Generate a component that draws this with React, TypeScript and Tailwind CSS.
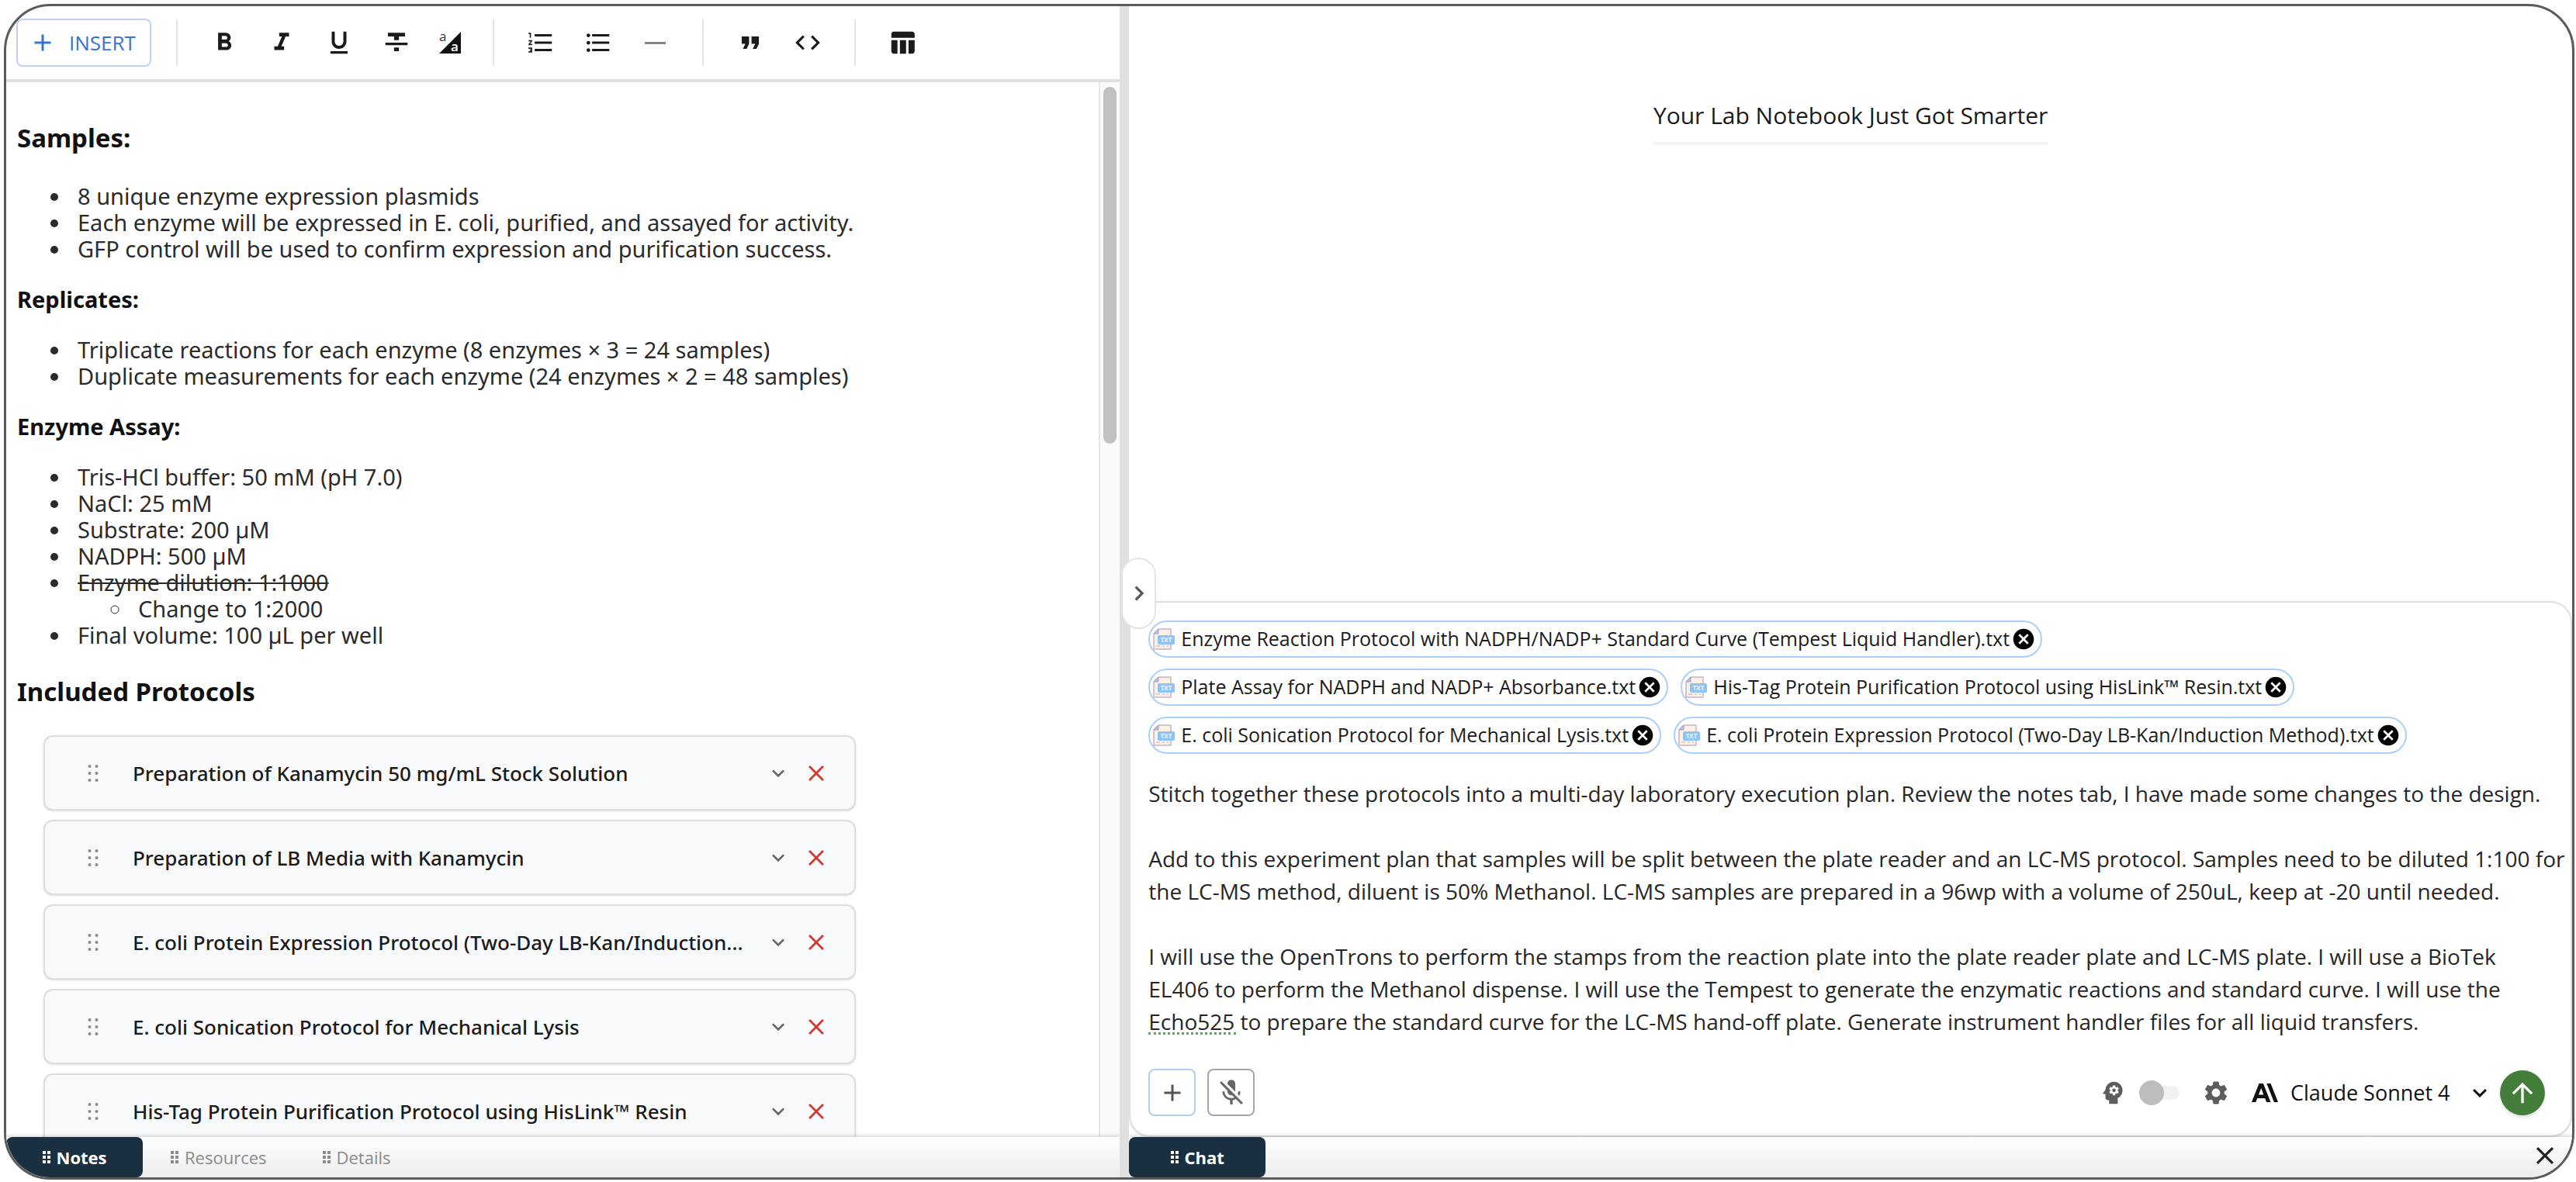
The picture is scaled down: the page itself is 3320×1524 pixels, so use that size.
import { useState, type ReactNode } from "react";
import clsx from "clsx";
import {
  MdAdd,
  MdArrowUpward,
  MdCancel,
  MdChevronRight,
  MdClose,
  MdCode,
  MdExpandMore,
  MdFormatBold,
  MdFormatItalic,
  MdFormatListBulleted,
  MdFormatListNumbered,
  MdFormatQuote,
  MdFormatStrikethrough,
  MdFormatUnderlined,
  MdMicOff,
  MdPsychology,
  MdSettings,
  MdTableChart,
} from "react-icons/md";
import { SiAnthropic } from "react-icons/si";

const protocols = [
  "Preparation of Kanamycin 50 mg/mL Stock Solution",
  "Preparation of LB Media with Kanamycin",
  "E. coli Protein Expression Protocol (Two-Day LB-Kan/Induction...",
  "E. coli Sonication Protocol for Mechanical Lysis",
  "His-Tag Protein Purification Protocol using HisLink™ Resin",
];

const attachments = [
  "Enzyme Reaction Protocol with NADPH/NADP+ Standard Curve (Tempest Liquid Handler).txt",
  "Plate Assay for NADPH and NADP+ Absorbance.txt",
  "His-Tag Protein Purification Protocol using HisLink™ Resin.txt",
  "E. coli Sonication Protocol for Mechanical Lysis.txt",
  "E. coli Protein Expression Protocol (Two-Day LB-Kan/Induction Method).txt",
];

const initialPrompt = `Stitch together these protocols into a multi-day laboratory execution plan. Review the notes tab, I have made some changes to the design.

Add to this experiment plan that samples will be split between the plate reader and an LC-MS protocol. Samples need to be diluted 1:100 for
the LC-MS method, diluent is 50% Methanol. LC-MS samples are prepared in a 96wp with a volume of 250uL, keep at -20 until needed.

I will use the OpenTrons to perform the stamps from the reaction plate into the plate reader plate and LC-MS plate. I will use a BioTek
EL406 to perform the Methanol dispense. I will use the Tempest to generate the enzymatic reactions and standard curve. I will use the
Echo525 to prepare the standard curve for the LC-MS hand-off plate. Generate instrument handler files for all liquid transfers.`;

function GripDots({ className }: { className?: string }) {
  return (
    <svg viewBox="0 0 14 22" className={className} fill="currentColor" aria-hidden>
      {[2, 11, 20].map((y) => (
        <g key={y}>
          <circle cx="2.5" cy={y} r="2" />
          <circle cx="11.5" cy={y} r="2" />
        </g>
      ))}
    </svg>
  );
}

function TabDots() {
  return (
    <svg viewBox="0 0 10 16" className="h-4 w-2.5" fill="currentColor" aria-hidden>
      {[0, 6, 12].map((y) => (
        <g key={y}>
          <rect x="0" y={y} width="4" height="4" />
          <rect x="6" y={y} width="4" height="4" />
        </g>
      ))}
    </svg>
  );
}

function HighlightIcon() {
  return (
    <svg viewBox="0 0 28 28" className="size-7 overflow-visible" aria-hidden>
      <path d="M28 0v28H0z" fill="#111" />
      <text x="0" y="12" fontSize="17" fill="#333" fontFamily="Open Sans, sans-serif">
        a
      </text>
      <text x="15" y="25" fontSize="17" fontWeight="600" fill="#fff" fontFamily="Open Sans, sans-serif">
        a
      </text>
    </svg>
  );
}

function TxtIcon() {
  return (
    <svg viewBox="0 0 28 28" className="size-7 shrink-0" aria-hidden>
      <path
        d="M7 1h16v26H1V7z"
        fill="#fdf1e3"
        stroke="#c9b1cb"
        strokeWidth="1.5"
        strokeLinejoin="round"
      />
      <path d="M7 1v6H1z" fill="#b9c3ea" stroke="#a99bc8" />
      <path d="M4 23h5M12 23h3M18 23h2" stroke="#d9c2cf" strokeWidth="1.5" />
      <rect x="6" y="9" width="22" height="12" rx="2" fill="#8cc4f7" />
      <text
        x="17"
        y="18"
        fontSize="8"
        fontWeight="700"
        fill="#e8f4ff"
        textAnchor="middle"
        fontFamily="Open Sans, sans-serif"
      >
        TXT
      </text>
    </svg>
  );
}

function ToolButton({
  label,
  narrow,
  children,
}: {
  label: string;
  narrow?: boolean;
  children: ReactNode;
}) {
  return (
    <button
      aria-label={label}
      className={clsx(
        "flex h-15 items-center justify-center text-[38px] text-[#1b1b1b]",
        narrow ? "w-16" : "w-[74px]",
      )}
    >
      {children}
    </button>
  );
}

function ToolGroup({ children }: { children: ReactNode }) {
  return (
    <div className="flex border-l-2 border-[#e4e4e4] px-[23px]">{children}</div>
  );
}

function Toolbar() {
  return (
    <div className="flex h-[98px] shrink-0 items-center border-b-4 border-[#e0e0e0] pl-[13px]">
      <button className="mr-8 flex h-[62px] items-center gap-4 rounded-lg border-2 border-[#bcd3f5] pr-[18px] pl-3.5 text-[26px] text-[#3474d4]">
        <MdAdd className="size-9" />
        INSERT
      </button>
      <ToolGroup>
        <ToolButton label="Bold"><MdFormatBold /></ToolButton>
        <ToolButton label="Italic"><MdFormatItalic /></ToolButton>
        <ToolButton label="Underline"><MdFormatUnderlined /></ToolButton>
        <ToolButton label="Strikethrough"><MdFormatStrikethrough /></ToolButton>
        <ToolButton label="Highlight" narrow><HighlightIcon /></ToolButton>
      </ToolGroup>
      <ToolGroup>
        <ToolButton label="Numbered list"><MdFormatListNumbered /></ToolButton>
        <ToolButton label="Bulleted list"><MdFormatListBulleted /></ToolButton>
        <ToolButton label="Divider">
          <span className="h-[3px] w-[27px] bg-[#858585]" />
        </ToolButton>
      </ToolGroup>
      <ToolGroup>
        <ToolButton label="Quote"><MdFormatQuote /></ToolButton>
        <ToolButton label="Code"><MdCode /></ToolButton>
      </ToolGroup>
      <ToolGroup>
        <ToolButton label="Table"><MdTableChart /></ToolButton>
      </ToolGroup>
    </div>
  );
}

function ProtocolCard({ title }: { title: string }) {
  return (
    <li className="flex h-[97px] shrink-0 items-center rounded-xl border-2 border-[#dcdee0] bg-[#f8f9fb] pr-8 pl-[55px] shadow-sm">
      <GripDots className="h-[22px] w-3.5 shrink-0 text-[#8a8a8a]" />
      <span className="ml-11 min-w-0 flex-1 text-[26px] leading-10 font-medium text-[#1b1b1b]">
        {title}
      </span>
      <button aria-label={`Expand ${title}`} className="ml-4 text-[#666]">
        <MdExpandMore className="size-8" />
      </button>
      <button aria-label={`Remove ${title}`} className="ml-4 text-[#cf3a33]">
        <MdClose className="size-[34px]" />
      </button>
    </li>
  );
}

function Notes() {
  return (
    <div className="flex min-h-0 flex-1">
      <article className="min-w-0 flex-1 overflow-hidden pt-[50px] pl-3.5 font-['Noto_Sans',sans-serif] text-[29px] leading-[34px] text-[#2b2b2b]">
        <h2 className="text-[33px] leading-11 font-bold text-[#111]">Samples:</h2>
        <ul className="mt-9 list-disc pl-[70px] [&>li]:pl-2">
          <li>8 unique enzyme expression plasmids</li>
          <li>Each enzyme will be expressed in E. coli, purified, and assayed for activity.</li>
          <li>GFP control will be used to confirm expression and purification success.</li>
        </ul>
        <h3 className="mt-7 leading-10 font-bold text-[#111]">Replicates:</h3>
        <ul className="mt-7 list-disc pl-[70px] [&>li]:pl-2">
          <li>Triplicate reactions for each enzyme (8 enzymes × 3 = 24 samples)</li>
          <li>Duplicate measurements for each enzyme (24 enzymes × 2 = 48 samples)</li>
        </ul>
        <h3 className="mt-7 leading-10 font-bold text-[#111]">Enzyme Assay:</h3>
        <ul className="mt-7 list-disc pl-[70px] [&>li]:pl-2">
          <li>Tris-HCl buffer: 50 mM (pH 7.0)</li>
          <li>NaCl: 25 mM</li>
          <li>Substrate: 200 µM</li>
          <li>NADPH: 500 µM</li>
          <li>
            <s className="decoration-2">Enzyme dilution: 1:1000</s>
            <ul className="list-[circle] pl-[70px] [&>li]:pl-2">
              <li>Change to 1:2000</li>
            </ul>
          </li>
          <li>Final volume: 100 µL per well</li>
        </ul>
        <h2 className="mt-[34px] text-[33px] leading-11 font-bold text-[#111]">
          Included Protocols
        </h2>
        <ul className="mt-[34px] mr-[22.5%] ml-[34px] flex flex-col gap-3">
          {protocols.map((title) => (
            <ProtocolCard key={title} title={title} />
          ))}
        </ul>
      </article>
      <div className="w-[27px] shrink-0 border-l-2 border-[#e6e6e6] bg-[#fafafa] px-1 pt-1.5">
        <div className="h-[34%] rounded-full bg-[#c1c1c1]" />
      </div>
    </div>
  );
}

function Tab({ label, active }: { label: string; active?: boolean }) {
  return (
    <button
      role="tab"
      aria-selected={!!active}
      className={clsx(
        "flex h-full items-center gap-2 text-[22px]",
        active
          ? "w-[176px] justify-center rounded-lg bg-[#1a2f3f] font-bold text-white"
          : "px-9 text-[#8a8a8a]",
      )}
    >
      <TabDots />
      {label}
    </button>
  );
}

function TabBar({ children }: { children: ReactNode }) {
  return (
    <div className="flex h-[52px] shrink-0 bg-linear-to-b from-white to-[#ececec] shadow-[0_-2px_4px_rgba(0,0,0,0.14)]">
      {children}
    </div>
  );
}

function Attachment({ name }: { name: string }) {
  return (
    <li className="flex h-12 items-center rounded-full border-2 border-[#a9d0fa] px-1 text-[25px] text-[#1b1b1b]">
      <TxtIcon />
      <span className="ml-2 whitespace-nowrap">{name}</span>
      <button aria-label={`Remove ${name}`} className="mx-0.5 text-black">
        <MdCancel className="size-8" />
      </button>
    </li>
  );
}

function Composer() {
  const [prompt, setPrompt] = useState(initialPrompt);
  const [thinking, setThinking] = useState(false);

  return (
    <div className="shrink-0 rounded-[28px] rounded-tl-none border-2 border-[#e0e0e0] bg-white pt-[23px] pb-[25px] shadow-sm">
      <ul className="flex flex-wrap gap-x-4 gap-y-3.5 px-[23px]">
        {attachments.map((name) => (
          <Attachment key={name} name={name} />
        ))}
      </ul>

      <div className="relative mt-[30px] h-[336px] pr-0.5 pl-[23px] text-[28px] leading-[42px] text-[#262626]">
        <textarea
          aria-label="Message"
          spellCheck={false}
          value={prompt}
          onChange={(e) => setPrompt(e.target.value)}
          className="block size-full resize-none overflow-hidden outline-none"
        />
        {/* spelling mark under the first word of the last line */}
        <span className="pointer-events-none absolute bottom-1 left-[23px] w-[113px] border-b-3 border-dotted border-[#4caf50]" />
      </div>

      <div className="mt-10 flex items-center pr-[33px] pl-[23px]">
        <button
          aria-label="Add attachment"
          className="flex size-[61px] items-center justify-center rounded-lg border-2 border-[#b3cef5] text-[#555]"
        >
          <MdAdd className="size-9" />
        </button>
        <button
          aria-label="Microphone off"
          className="ml-[15px] flex size-[61px] items-center justify-center rounded-lg border-2 border-[#a6a6a6] text-[#666]"
        >
          <MdMicOff className="size-10" />
        </button>

        <label className="ml-auto flex items-center gap-[15px] text-[#5c5c5c]">
          <MdPsychology className="size-[38px]" aria-label="Extended thinking" />
          <input
            type="checkbox"
            role="switch"
            checked={thinking}
            onChange={(e) => setThinking(e.target.checked)}
            className="relative h-8 w-14 appearance-none before:absolute before:inset-x-1 before:top-[7px] before:h-[18px] before:rounded-full before:bg-[#f1f1f1] after:absolute after:top-0 after:left-0 after:size-8 after:rounded-full after:bg-[#bdbdbd] checked:after:left-6"
          />
        </label>
        <button aria-label="Settings" className="ml-[25px] text-[#5c5c5c]">
          <MdSettings className="size-9" />
        </button>
        <SiAnthropic className="ml-7 size-[34px] text-[#111]" aria-hidden />
        <div className="relative ml-4 text-[#111]">
          <select
            aria-label="Model"
            className="h-10 w-[262px] appearance-none text-[27px] leading-10 outline-none"
          >
            <option>Claude Sonnet 4</option>
          </select>
          <MdExpandMore className="pointer-events-none absolute top-0.5 right-0 size-9" />
        </div>
        <button
          aria-label="Send"
          className="ml-2 flex size-[58px] items-center justify-center rounded-full bg-[#427d39] text-white shadow-md"
        >
          <MdArrowUpward className="size-10" />
        </button>
      </div>
    </div>
  );
}

export default function App() {
  return (
    <div className="h-screen bg-white pt-[5px] pr-0.5 pb-[3px] pl-[5px] font-['Open_Sans','Noto_Sans',sans-serif]">
      <div className="flex h-full overflow-hidden rounded-[60px] border-[3px] border-[#5a5b5b]">
        <section className="flex w-[43.4%] shrink-0 flex-col">
          <Toolbar />
          <Notes />
          <TabBar>
            <Tab label="Notes" active />
            <Tab label="Resources" />
            <Tab label="Details" />
          </TabBar>
        </section>

        <div className="relative z-10 w-3 shrink-0 bg-[#e0e0e0]">
          <button
            aria-label="Collapse panel"
            className="absolute top-[711px] left-0.5 flex h-[92px] w-[45px] items-center justify-center rounded-full border-2 border-[#e4e4e4] bg-white text-[#555]"
          >
            <MdChevronRight className="size-[38px] shrink-0" />
          </button>
        </div>

        <section className="flex min-w-0 flex-1 flex-col">
          <div className="flex-1 pt-[115px] text-center">
            <h1 className="inline-block border-b-4 border-[#f4f4f4] pb-2 text-[30px] leading-[52px] text-[#1b1b1b]">
              Your Lab Notebook Just Got Smarter
            </h1>
          </div>
          <Composer />
          <TabBar>
            <Tab label="Chat" active />
            <button aria-label="Close panel" className="mr-4 ml-auto pb-1 text-[#222]">
              <MdClose className="size-[38px]" />
            </button>
          </TabBar>
        </section>
      </div>
    </div>
  );
}
